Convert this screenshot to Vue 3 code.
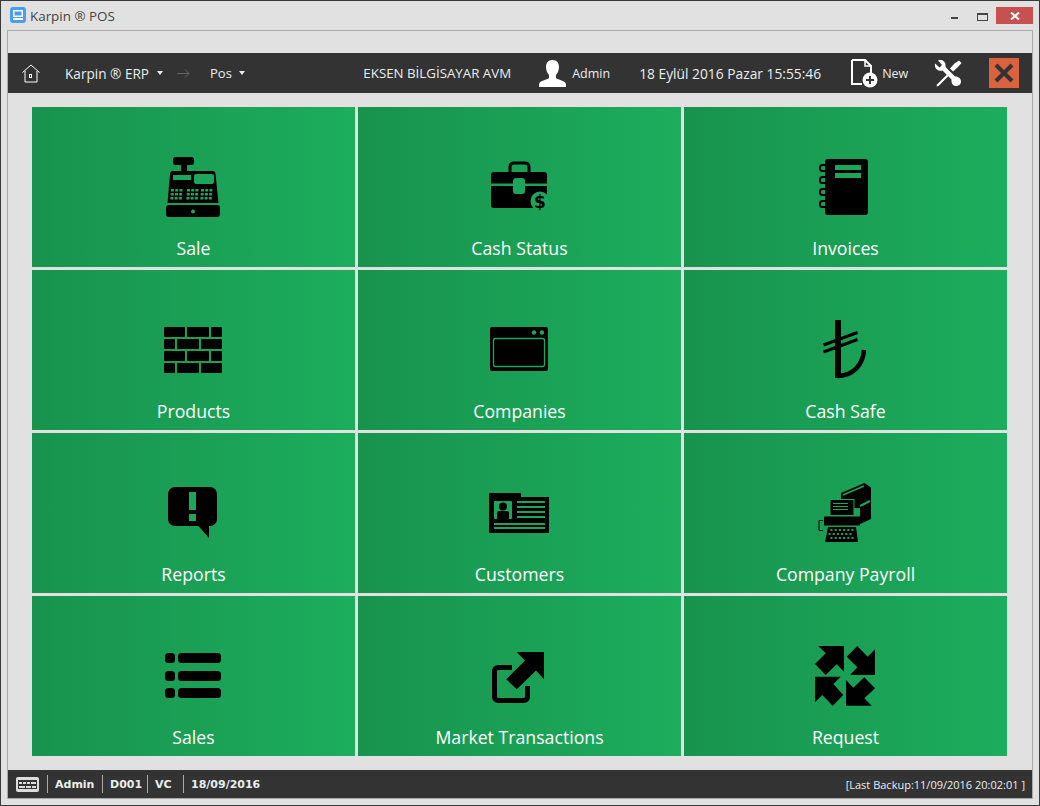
<template>
  <div class="window">
    <div class="titlebar">
      <svg class="app-icon" width="16" height="16" viewBox="0 0 16 16">
        <rect width="16" height="16" rx="3" fill="#4a9df0" />
        <rect x="3" y="3" width="10" height="7" fill="#fff" />
        <rect x="4.500" y="4.500" width="7" height="4" fill="#4a9df0" />
        <rect x="3" y="11" width="10" height="2" fill="#fff" />
      </svg>
      <span class="app-title">Karpin ® POS</span>
      <div class="win-controls">
        <span class="win-min"></span>
        <span class="win-max"></span>
        <span class="win-close">
          <svg width="10" height="8" viewBox="0 0 10 8"><path d="M1 0.500 9 7.500M9 0.500 1 7.500" stroke="#fff" stroke-width="2" /></svg>
        </span>
      </div>
    </div>

    <div class="panel">
      <header class="topbar">
        <svg class="home" width="18" height="19" viewBox="0 0 18 19" fill="none" stroke="#fff">
          <path d="M0.500 8.500 9 1l8.500 7.500M3 7v11h12V7" />
          <rect x="7.500" y="10.500" width="2" height="3" />
        </svg>
        <span class="menu first">Karpin ® ERP</span>
        <span class="caret c-first"></span>
        <svg class="crumb-arrow" width="13" height="9" viewBox="0 0 13 9" fill="none" stroke="#666">
          <path d="M0 4.500h12M8 0.500l4 4-4 4" />
        </svg>
        <span class="menu pos">Pos</span>
        <span class="caret c-pos"></span>
        <span class="menu company">EKSEN BİLGİSAYAR AVM</span>
        <svg class="user" width="27" height="27" viewBox="0 0 27 27" fill="#fff">
          <path d="M13.500 0C9 0 7 3 7 7c0 3.500 1.500 6.500 3 8v3c-2 2-9 2.500-10 6v3h27v-3c-1-3.500-8-4-10-6v-3c1.500-1.500 3-4.500 3-8 0-4-2-7-6.500-7z" />
        </svg>
        <span class="menu admin">Admin</span>
        <span class="menu date">18 Eylül 2016 Pazar 15:55:46</span>
        <svg class="new-doc" width="27" height="29" viewBox="0 0 27 29">
          <path d="M1 1h13l6 6v8M1 1v24h10" fill="none" stroke="#fff" stroke-width="2" />
          <path d="M14 1v6h6" fill="none" stroke="#fff" stroke-width="1.500" />
          <circle cx="19" cy="21" r="7.500" fill="#fff" />
          <path d="M19 17v8M15 21h8" stroke="#333" stroke-width="2" />
        </svg>
        <span class="menu new">New</span>
        <svg class="tools" width="28" height="27" viewBox="0 0 28 27" fill="#fff">
          <path d="M1 3.500l4.500 4 2.500-2.500-4-4.500c4-1.500 8 1 7.500 5.500l.5 1.500 9 9c3-.5 6 2 6 5s-2.500 4.500-5 4.500-4.500-2-4.500-4.500 0-1 0-2l-9-9c-4 1-8.500-2-7.500-7z" />
          <path d="M27.500 3 25 .5l-4.500 3-4.500 5 3 3 5-4.500z" />
          <path d="M14.500 13 3 24.500l-.5 2 2-.5L16 14.500z" />
        </svg>
        <span class="close-btn">
          <svg width="20" height="20" viewBox="0 0 20 20"><path d="M2 2 18 18M18 2 2 18" stroke="#333" stroke-width="4" /></svg>
        </span>
      </header>

      <main class="grid">
        <div v-for="tile in tiles" :key="tile.key" class="tile">
          <svg class="tile-icon" width="81" height="80" viewBox="0 0 81 80">
            <g v-if="tile.key === 'sale'">
              <rect x="20" y="15" width="21" height="8" rx="2.500" />
              <rect x="28" y="22" width="6" height="8" />
              <path d="M19 29h41q2 0 2.500 3L65.500 61h-51L17 32q.5-3 2-3z" />
              <rect x="20" y="33" width="18" height="5" class="g" />
              <rect x="41" y="32" width="20" height="10" rx="2" class="g" />
              <rect v-for="(k, i) in saleKeys" :key="i" :x="k.x" :y="k.y" :width="k.w" height="2.500" class="g" />
              <rect x="13" y="63" width="54" height="12" rx="3" />
              <circle cx="40" cy="69.500" r="2" class="g" />
            </g>
            <g v-else-if="tile.key === 'cash'">
              <path d="M31 30v-5q0-4 4-4h11q4 0 4 4v5" fill="none" stroke="#000" stroke-width="3" />
              <path d="M15 30h50q3 0 3 3v8.500H12V33q0-3 3-3z" />
              <path d="M12 44h56v19q0 3-3 3H15q-3 0-3-3z" />
              <rect x="34" y="36" width="12" height="16" rx="3" class="g" />
              <circle cx="61" cy="59" r="9.500" class="g" />
              <text x="61" y="65.500" text-anchor="middle" class="dollar">$</text>
            </g>
            <g v-else-if="tile.key === 'invoices'">
              <rect x="20" y="17" width="43" height="56" rx="3" />
              <rect x="30" y="23" width="26" height="5" class="g" />
              <rect x="30" y="31" width="26" height="5" class="g" />
              <rect v-for="y in [23, 35, 47, 59]" :key="y" x="15" :y="y" width="8" height="6" rx="2.500" fill="none" stroke="#000" stroke-width="2" />
            </g>
            <g v-else-if="tile.key === 'products'">
              <rect v-for="(b, i) in bricks" :key="i" :x="b.x" :y="b.y" :width="b.w" height="10" rx="1" />
            </g>
            <g v-else-if="tile.key === 'companies'">
              <rect x="11" y="22" width="58" height="44" rx="2" />
              <circle cx="55" cy="27.500" r="2.200" class="g" />
              <circle cx="63" cy="27.500" r="2.200" class="g" />
              <rect x="14.500" y="33.500" width="51" height="28" rx="2" fill="none" stroke="#1ca65b" stroke-width="1.300" />
            </g>
            <g v-else-if="tile.key === 'safe'" fill="none" stroke="#000">
              <path d="M33 15v58" stroke-width="6" />
              <path d="M18.500 40 52.500 27.500M18.500 47 52.500 34.500" stroke-width="3" />
              <path d="M32 71C48 71 58 60 59 45" stroke-width="4.500" />
            </g>
            <g v-else-if="tile.key === 'reports'">
              <rect x="15" y="19" width="49" height="39" rx="7" />
              <path d="M44.500 57 56 70V57z" />
              <rect x="36" y="24" width="7" height="18" class="g" />
              <rect x="36" y="46" width="7" height="7" class="g" />
            </g>
            <g v-else-if="tile.key === 'customers'">
              <path d="M10 65V26q0-1 1-1h30q1 0 1 1v3h28v36z" />
              <rect x="15" y="33" width="18" height="18" rx="1" class="g" />
              <circle cx="24" cy="38.500" r="4" />
              <path d="M18 51v-6q0-2 2-2h8q2 0 2 2v6z" />
              <rect v-for="y in [33, 38, 43, 48]" :key="y" x="38" :y="y" width="28" height="2" class="g" />
              <rect x="15" y="55" width="51" height="2" class="g" />
              <rect x="15" y="59" width="51" height="2" class="g" />
            </g>
            <g v-else-if="tile.key === 'payroll'">
              <path d="M36 25l23.500-10L66 19.500V51l-11 5V40H36z" />
              <path d="M38 27l21-9" stroke="#1ca65b" stroke-width="1.500" fill="none" />
              <path d="M55 38l10-5" stroke="#1ca65b" stroke-width="2" fill="none" />
              <rect x="25" y="31.500" width="24" height="16" stroke="#1ca65b" />
              <path d="M28 35.500h15M28 38.500h15M28 41.500h15" stroke="#1ca65b" />
              <rect x="19" y="48.500" width="36" height="9" />
              <path d="M18 52.500h-4v10h4" fill="none" stroke="#000" />
              <path d="M23 59h28l2 15H20z" />
              <rect v-for="(d, i) in typeKeys" :key="i" :x="d.x" :y="d.y" width="2" height="2" class="g" />
            </g>
            <g v-else-if="tile.key === 'sales'">
              <rect v-for="y in [22, 40, 57]" :key="y" x="12" :y="y" width="10" height="10" rx="3.500" />
              <rect v-for="y in [22, 40, 57]" :key="'b' + y" x="25" :y="y" width="43" height="10" rx="3.500" />
            </g>
            <g v-else-if="tile.key === 'market'">
              <path d="M33 36.500H19.500q-4 0-4 4v25q0 4 4 4h25q4 0 4-4V55" fill="none" stroke="#000" stroke-width="5" />
              <path d="M65 21H37.700L46 29.500 27.300 48.300 37.700 58.300 57 39.500 65 48.300z" />
            </g>
            <g v-else>
              <path d="M13.300 15H39V40.700L31.700 33.300 20.700 44 10 33 20.700 22.300z" />
              <path d="M70 18.300V44H45L52.300 36.300 41.700 25.700 52.300 15 62.700 25.700z" />
              <path d="M10 71.300V45.700H35.700L28.300 53 38.300 64 27.700 74.700 17.300 64z" />
              <path d="M41 49V74.700H66.700L59.300 67.300 70 57.300 59.300 46.300 48.300 56.700z" />
            </g>
          </svg>
          <span class="tile-label">{{ tile.label }}</span>
        </div>
      </main>

      <footer class="statusbar">
        <svg class="kbd" width="23" height="15" viewBox="0 0 23 15">
          <rect width="23" height="15" rx="2" fill="#ddd" />
          <path d="M2 3h19v9H2z" fill="#333" />
          <path d="M3 5h3v2H3zM7 5h3v2H7zM11 5h3v2h-3zM15 5h5v2h-5zM3 9h6v2H3zM10 9h5v2h-5zM16 9h4v2h-4z" fill="#ddd" />
        </svg>
        <span class="stat s-admin">Admin</span>
        <span class="stat s-code">D001</span>
        <span class="stat s-vc">VC</span>
        <span class="stat s-date">18/09/2016</span>
        <span class="backup">[Last Backup:11/09/2016 20:02:01 ]</span>
      </footer>
    </div>
  </div>
</template>

<script setup>
const tiles = [
  { key: 'sale', label: 'Sale' },
  { key: 'cash', label: 'Cash Status' },
  { key: 'invoices', label: 'Invoices' },
  { key: 'products', label: 'Products' },
  { key: 'companies', label: 'Companies' },
  { key: 'safe', label: 'Cash Safe' },
  { key: 'reports', label: 'Reports' },
  { key: 'customers', label: 'Customers' },
  { key: 'payroll', label: 'Company Payroll' },
  { key: 'sales', label: 'Sales' },
  { key: 'market', label: 'Market Transactions' },
  { key: 'request', label: 'Request' }
]

// keypad of the cash register, three groups of small keys
const saleKeys = []
for (const start of [18, 34, 48]) {
  for (let r = 0; r < 3; r++) {
    for (let c = 0; c < 3; c++) {
      saleKeys.push({ x: start + c * 4.200 - r * 0.300, y: 47 + r * 4, w: 3 })
    }
  }
}

const bricks = []
for (let r = 0; r < 4; r++) {
  const y = 22 + r * 12
  const row = r % 2 === 0
    ? [[11, 21], [34, 22], [58, 11]]
    : [[11, 11], [24, 22], [48, 21]]
  for (const [x, w] of row) bricks.push({ x, y, w })
}

const typeKeys = []
for (let r = 0; r < 3; r++) {
  for (let c = 0; c < 6; c++) {
    typeKeys.push({ x: 25.500 + c * 4.200 - (r === 1 ? 2 : 0), y: 61 + r * 4 })
  }
}
</script>

<style scoped>
.window {
  width: 1040px;
  height: 806px;
  box-sizing: border-box;
  background: #e1e1e1;
  border: 1px solid #3a3a3a;
  padding: 0 6px 6px;
  display: flex;
  flex-direction: column;
  font-family: "Open Sans", "Noto Sans", sans-serif;
  overflow: hidden;
}

/* barra de titulo */
.titlebar {
  height: 29px;
  display: flex;
  align-items: center;
  flex-shrink: 0;
  margin-left: 3px;
  position: relative;
}
.app-icon { margin-top: -1px; }
.app-title {
  margin-left: 4px;
  font-size: 13.400px;
  color: #444;
}
.win-controls {
  margin-left: auto;
  display: flex;
  align-items: flex-start;
  align-self: flex-start;
  padding-top: 6px;
}
.win-min {
  width: 7px;
  height: 2px;
  background: #444;
  margin-top: 10px;
}
.win-max {
  width: 9px;
  height: 5px;
  border: 1px solid #444;
  border-top-width: 2px;
  margin: 6px 0 0 19px;
}
.win-close {
  width: 37px;
  height: 17px;
  background: #c75050;
  margin-left: 8px;
  display: flex;
  align-items: center;
  justify-content: center;
}

.panel {
  flex: 1;
  border: 1px solid #aaa;
  padding-top: 22px;
  display: flex;
  flex-direction: column;
  min-height: 0;
}

/* barra superior */
.topbar {
  height: 40px;
  background: #333;
  display: flex;
  align-items: center;
  flex-shrink: 0;
  color: #e8eef0;
}
.menu {
  font-size: 12.500px;
  white-space: nowrap;
}
.home { margin-left: 14px; }
.first { margin-left: 25px; font-size: 13.600px; }
.caret {
  width: 0;
  height: 0;
  border-left: 3.500px solid transparent;
  border-right: 3.500px solid transparent;
  border-top: 4px solid #e8eef0;
}
.c-first { margin-left: 8px; }
.c-pos { margin-left: 7px; }
.crumb-arrow { margin-left: 14px; }
.pos { margin-left: 20px; font-size: 13px; }
.company { margin-left: 118.500px; font-size: 13.300px; }
.user { margin-left: 28px; }
.admin { margin-left: 6px; }
.date { margin-left: 29px; font-size: 13.800px; }
.new-doc { margin-left: 30px; }
.new { margin-left: 4px; }
.tools { margin-left: 26px; }
.close-btn {
  width: 30px;
  height: 30px;
  background: #d9623f;
  margin-left: 27px;
  display: flex;
  align-items: center;
  justify-content: center;
}

/* rejilla de accesos */
.grid {
  display: grid;
  grid-template-columns: repeat(3, 323px);
  grid-auto-rows: 160px;
  gap: 3px;
  padding: 14px 0 14px 24px;
}
.tile {
  background: linear-gradient(to right, #18934e, #1cad5d);
  display: flex;
  flex-direction: column;
  align-items: center;
  padding-top: 35px;
  box-sizing: border-box;
}
.tile-icon { fill: #000; display: block; }
.tile-icon .g { fill: #1ca65b; }
.dollar {
  font-family: "DejaVu Sans", sans-serif;
  font-size: 17px;
  font-weight: 700;
  fill: #000;
}
.tile-label {
  margin-top: 14px;
  font-size: 17.700px;
  line-height: 24px;
  color: #fff;
}

/* barra de estado */
.statusbar {
  height: 28px;
  background: #333;
  display: flex;
  align-items: center;
  flex-shrink: 0;
  color: #e8eef0;
}
.kbd { margin-left: 8px; }
.stat {
  font-family: "DejaVu Sans", sans-serif;
  font-size: 11px;
  font-weight: 700;
  border-left: 1px solid #aaa;
  height: 18px;
  line-height: 19px;
  padding-left: 7px;
  box-sizing: border-box;
}
.s-admin { margin-left: 8px; width: 55px; }
.s-code { width: 45px; }
.s-vc { width: 36px; }
.backup {
  margin-left: auto;
  margin-right: 7px;
  font-size: 11px;
}
</style>

<style>
html, body { margin: 0; background: #e1e1e1; }
</style>
